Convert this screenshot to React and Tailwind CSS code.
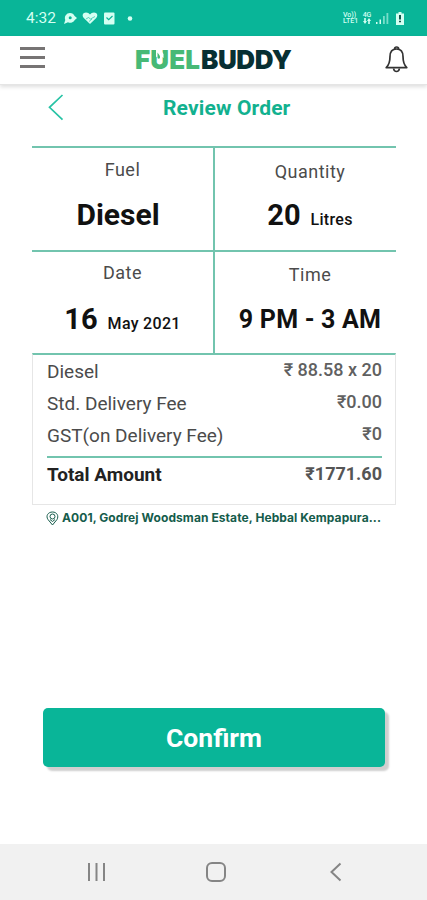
const CELLS = [
  { label: 'Fuel', value: 'Diesel', cellClass: 'border-r-2', labelClass: 'pt-[13px]', valueClass: 'text-[30px] pr-[9px]', gap: 'mt-[21px]' },
  { label: 'Quantity', value: '20', unit: 'Litres', cellClass: 'pl-[9px]', labelClass: 'pt-[15px]', valueClass: 'text-[29px]', gap: 'mt-[19px]' },
  { label: 'Date', value: '16', unit: 'May 2021', cellClass: 'border-r-2', labelClass: 'pt-[12px]', valueClass: 'text-[29px]', gap: 'mt-[22px]' },
  { label: 'Time', value: '9 PM - 3 AM', cellClass: 'pl-[9px]', labelClass: 'pt-[14px]', valueClass: 'text-[25px] tracking-[0.200px]', gap: 'mt-[21px]' },
]

const ROWS = [
  { name: 'Diesel', price: '₹ 88.58 x 20' },
  { name: 'Std. Delivery Fee', price: '₹0.00' },
  { name: 'GST(on Delivery Fee)', price: '₹0' },
]

function StatusBar() {
  return (
    <div className="flex h-[36px] items-center bg-[#09b598] pl-[26px] pr-[23px] text-[#d4fff2]">
      <span className="w-[30px] pt-[2px] text-[15.500px] leading-none">4:32</span>
      <svg className="ml-[7px]" width="72" height="16" viewBox="0 0 72 16" fill="currentColor">
        <path d="M7 3a5 5 0 0 1 4.600 3L14 8l-2.200 2A5 5 0 0 1 5 12.300L1 14l1.300-4A5 5 0 0 1 7 3Z" />
        <circle cx="7.200" cy="7.800" r="1.500" fill="#09b598" />
        <path d="M27 14 20.800 8C18.500 5.500 20 2.500 23 2.500c1.800 0 3 .8 4 2 1-1.200 2.200-2 4-2 3 0 4.500 3 2.200 5.500Z" />
        <path d="m23 9 2.500-1.500 2 1.500 4.500-2.500M26 11.500l3-2.500" fill="none" stroke="#09b598" strokeWidth="0.600" />
        <rect x="41" y="2.500" width="10.500" height="12" rx="1" />
        <path d="m43.500 7.500 2.200 2.200L49.500 6" fill="none" stroke="#09b598" strokeWidth="1.200" />
        <circle cx="67" cy="8.500" r="2.300" />
      </svg>
      <div className="ml-auto flex h-[14px] items-center">
        <div className="flex w-[17px] flex-col text-[7px] font-medium leading-[6.500px]">
          <span>Vo))</span>
          <span>LTE1</span>
        </div>
        <div className="ml-[2px] flex w-[10px] flex-col items-center text-[7px] font-medium leading-[6px]">
          <span>4G</span>
          <svg width="8" height="6" viewBox="0 0 8 6" fill="currentColor">
            <path d="M2 6 0 3h1.200V0h1.600v3H4ZM6 0l2 3H6.800v3H5.200V3H4Z" />
          </svg>
        </div>
        <svg className="ml-[4px]" width="13" height="12" viewBox="0 0 13 12" fill="currentColor">
          <path d="M0 10h1.500v2H0ZM3.500 7.500H5V12H3.500Z" />
          <path d="M7 4h1.800v8H7ZM10.500 1h1.800v11h-1.800Z" opacity="0.550" />
        </svg>
        <svg className="ml-[7px]" width="8" height="13" viewBox="0 0 8 13">
          <path d="M2.500 0h3v1.500H8V13H0V1.500h2.500Z" fill="currentColor" />
          <path d="M3 3h2v4.500H3ZM3 8.700h2v1.500H3Z" fill="#12544a" />
        </svg>
      </div>
    </div>
  )
}

function Header() {
  return (
    <header className="flex h-[49px] items-center border-b border-[#e5e5e5] bg-white pl-[20px] pr-[19px] shadow-[0_2px_4px_rgba(0,0,0,0.130)]">
      <div className="flex w-[25px] -translate-y-[3px] flex-col gap-[6px]">
        <span className="h-[3px] bg-[#777474]" />
        <span className="h-[3px] bg-[#777474]" />
        <span className="h-[3px] bg-[#777474]" />
      </div>
      <div className="ml-[90px] flex items-center font-['Inter'] text-[26px] font-black leading-[26px] text-[#072f32]">
        <span className="w-[66px] tracking-[0.100px] text-[#47b976]">
          F<span className="relative">U
            <svg className="absolute left-[6px] top-[5px]" width="8" height="12" viewBox="0 0 8 12">
              <path d="M0 0h4l3.500 5v4L4 6.500v4L0 7.500Z" fill="#fff" />
              <path d="M1.500 3.500c1 2 3 3 2.500 5.500-1 1.500-3 .5-2.500-1Z" fill="#47b976" />
            </svg>
          </span>EL
        </span>
        <span className="tracking-[-0.400px]">BUDDY</span>
      </div>
      <svg className="ml-auto" width="23" height="28" viewBox="0 0 23 28" fill="none" stroke="#333" strokeWidth="1.700" strokeLinejoin="round">
        <path d="M9.600 3a2 2 0 0 1 4 0M11.500 3C7 3 5 6.300 5 10.600c0 5-.8 8.400-3.800 11h20.600c-3-2.600-3.800-6-3.800-11C18 6.300 16 3 11.500 3Z" />
        <path d="M8.600 22.500c.5 4 5.300 4 5.800 0" />
      </svg>
    </header>
  )
}

function Cell({ cell }) {
  return (
    <div className={`h-[103.500px] border-t-2 border-[#72c4ae] text-center ${cell.cellClass}`}>
      <p className={`text-[18px] leading-[18px] tracking-[0.500px] text-[#4b4b4b] ${cell.labelClass}`}>{cell.label}</p>
      <div className={`flex items-baseline justify-center gap-[10px] whitespace-nowrap leading-[30px] text-[#111] ${cell.gap}`}>
        <span className={`font-bold ${cell.valueClass}`}>{cell.value}</span>
        {cell.unit && <span className="text-[16px] font-medium tracking-[0.300px]">{cell.unit}</span>}
      </div>
    </div>
  )
}

export default function App() {
  return (
    <div className="flex h-[900px] w-[427px] flex-col overflow-hidden bg-white font-['Roboto',sans-serif]">
      <StatusBar />
      <Header />

      <div className="flex h-[61px] pl-[48px]">
        <svg className="mt-[9px]" width="16" height="27" viewBox="0 0 16 27" fill="none" stroke="#27c3a5" strokeWidth="1.700">
          <path d="M14.500 1 1.500 13.300 14.500 25.700" />
        </svg>
        <h1 className="ml-[99px] mt-[11px] text-[21px] font-bold leading-[24px] tracking-[0.150px] text-[#12b18f]">Review Order</h1>
      </div>

      <main className="mx-[32px]">
        <div className="grid grid-cols-[183px_181px]">
          {CELLS.map((cell) => (
            <Cell key={cell.label} cell={cell} />
          ))}
        </div>

        <section className="h-[152px] w-[364px] border border-t-2 border-[#e6e6e6] border-t-[#72c4ae] pl-[14px] pr-[13px]">
          {ROWS.map((row) => (
            <div key={row.name} className="flex h-[32px] justify-between pt-[5px] leading-[24px]">
              <span className="text-[19px] text-[#4b4b4b]">{row.name}</span>
              <span className="-mt-[2px] text-[18px] font-medium text-[#606060]">{row.price}</span>
            </div>
          ))}
          <div className="mt-[5px] flex justify-between border-t-2 border-[#72c4ae] pt-[5px] leading-[24px]">
            <span className="text-[19px] font-bold text-[#222]">Total Amount</span>
            <span className="-mt-[1px] text-[18px] font-bold text-[#555]">₹1771.60</span>
          </div>
        </section>

        <div className="mt-[5px] flex items-center pl-[14px] text-[#155c4b]">
          <svg width="13" height="15" viewBox="0 0 13 15" fill="none" stroke="currentColor" strokeWidth="1">
            <path d="M6.500 14 2 8.500C-.5 5 2 1 6.500 1S13 5 11 8.500Z" />
            <circle cx="6.500" cy="5.500" r="2.500" />
            <path d="m4 8.500 2.500 2 2.500-2" />
          </svg>
          <span className="ml-[3px] whitespace-nowrap font-['Inter'] text-[12px] font-bold leading-[16px] tracking-[0.080px]">
            A001, Godrej Woodsman Estate, Hebbal Kempapura...
          </span>
        </div>
      </main>

      <button className="ml-[43px] mt-auto h-[59px] w-[342px] rounded-[5px] bg-[#09b598] text-[26.500px] font-bold text-white shadow-[4px_4px_2px_#cfcfcf]">
        Confirm
      </button>

      <nav className="mt-[77px] flex h-[56px] shrink-0 items-center bg-[#f1f1f1] pl-[87px]">
        <svg width="20" height="20" viewBox="0 0 20 20" stroke="#858585" strokeWidth="2">
          <path d="M2 1v18M9.500 1v18M17 1v18" />
        </svg>
        <svg className="ml-[98px]" width="22" height="22" viewBox="0 0 22 22" fill="none" stroke="#858585" strokeWidth="2">
          <rect x="2" y="2" width="18" height="18" rx="5" />
        </svg>
        <svg className="ml-[102px]" width="13" height="20" viewBox="0 0 13 20" fill="none" stroke="#858585" strokeWidth="2">
          <path d="m11.500 1.500-9 8.500 9 8.500" />
        </svg>
      </nav>
    </div>
  )
}
